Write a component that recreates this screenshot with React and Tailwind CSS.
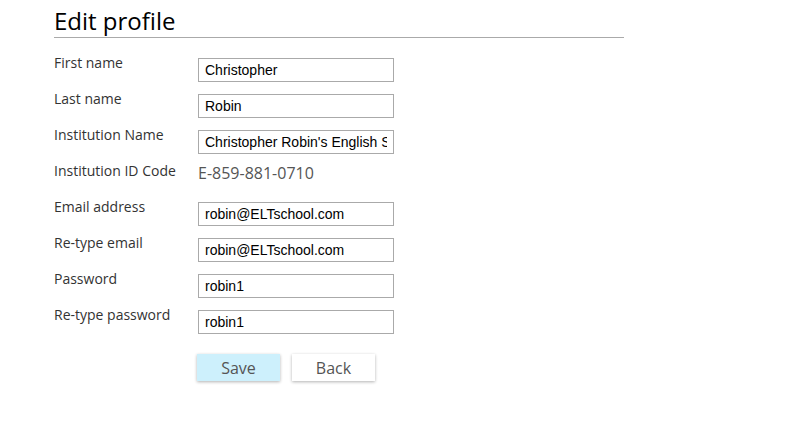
import React from 'react';

const rows = [
  { label: 'First name', value: 'Christopher' },
  { label: 'Last name', value: 'Robin' },
  { label: 'Institution Name', value: "Christopher Robin's English School" },
  { label: 'Institution ID Code', value: 'E-859-881-0710', plain: true },
  { label: 'Email address', value: 'robin@ELTschool.com' },
  { label: 'Re-type email', value: 'robin@ELTschool.com' },
  { label: 'Password', value: 'robin1' },
  { label: 'Re-type password', value: 'robin1' },
];

export default function App() {
  return (
    <div className="w-[800px] h-[421px] bg-white font-['Open_Sans',sans-serif] text-[#333]">
      <div className="pl-[54px] pt-[6px] w-[624px]">
        {/* Title with underline */}
        <h1 className="text-[24px] leading-[30px] text-black border-b border-[#aaa] pb-[1px]">
          Edit profile
        </h1>

        <div className="mt-[15px] flex flex-col">
          {rows.map(r => (
            <div key={r.label} className="flex items-start h-[36px]">
              <div className="w-[144px] text-[14px] leading-[20px] text-[#333]">{r.label}</div>
              {r.plain ? (
                <div className="text-[16px] leading-[22px] text-[#555] pt-[1px]">{r.value}</div>
              ) : (
                <input
                  readOnly
                  value={r.value}
                  className="mt-[5px] w-[196px] h-[24px] border border-[#aaa] px-[6px] text-[14px] text-black font-['Liberation_Sans',Arial,sans-serif] outline-none bg-white"
                />
              )}
            </div>
          ))}
        </div>

        <div className="flex gap-[12px] ml-[143px] mt-[13px]">
          <button className="w-[83px] h-[27px] bg-[#cdf0fc] text-[16px] text-[#555] shadow-[0_1px_3px_rgba(0,0,0,0.3)]">
            Save
          </button>
          <button className="w-[83px] h-[27px] bg-white text-[16px] text-[#555] shadow-[0_1px_3px_rgba(0,0,0,0.3)]">
            Back
          </button>
        </div>
      </div>
    </div>
  );
}
